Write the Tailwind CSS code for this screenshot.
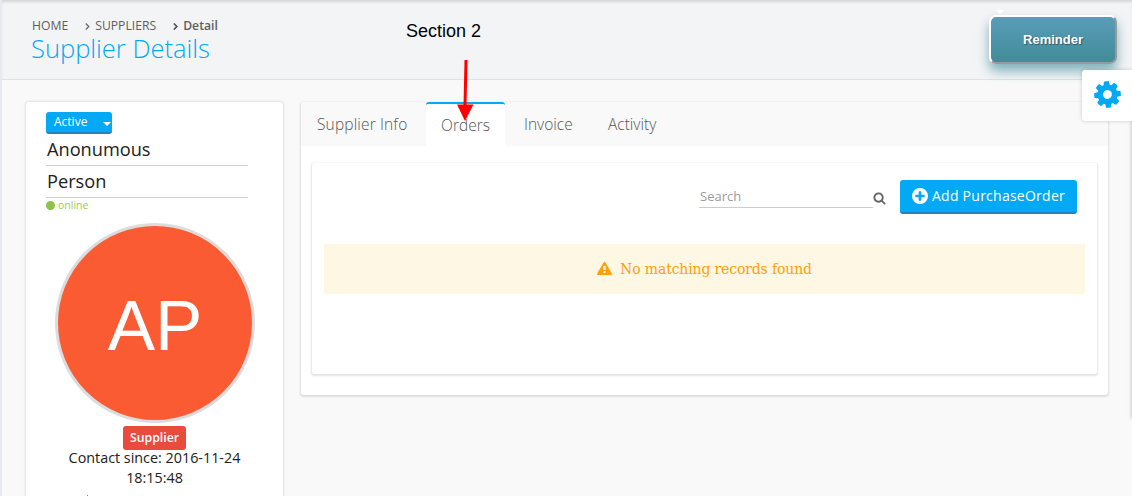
<!DOCTYPE html>
<html lang="en">
<head>
<meta charset="utf-8">
<title>Supplier Details</title>
<script src="https://cdn.jsdelivr.net/npm/@tailwindcss/browser@4"></script>
</head>
<body class="relative h-[496px] w-[1132px] overflow-hidden bg-[#f9f9f9] font-['Open_Sans',sans-serif] text-[#212121]">
<div class="flex h-full border-l-2 border-[#e7eaee]">
  <div class="flex w-full flex-col">
    <header class="flex h-20 shrink-0 items-start justify-between border-b border-[#dfe2e5] bg-[#f3f4f6] pl-[30px] pr-[15px] shadow-[inset_0_3px_3px_-1px_rgba(0,0,0,0.13)]">
      <div class="pt-[17px]">
        <nav class="flex h-[18px] items-center whitespace-nowrap text-[12.2px] leading-[18px] text-[#5e5e5e]">
          <span>HOME</span>
          <svg class="ml-[17px] mr-[5px] h-[7px] w-[5px]" viewBox="0 0 5 7" fill="none" stroke="#666" stroke-width="1.2"><path d="M.8.5 3.8 3.5.8 6.5"/></svg>
          <span>SUPPLIERS</span>
          <svg class="ml-[17px] mr-[5px] h-[7px] w-[5px]" viewBox="0 0 5 7" fill="none" stroke="#555" stroke-width="1.7"><path d="M.8.5 3.8 3.5.8 6.5"/></svg>
          <span class="font-semibold">Detail</span>
        </nav>
        <h1 class="-ml-px whitespace-nowrap text-[25.5px] font-light leading-[26px] text-[#03a9f4]">Supplier Details</h1>
      </div>
      <button class="mt-[15px] h-[49px] w-[128px] rounded-[7px] border-2 border-t-white border-l-white border-r-[#999] border-b-[#999] bg-linear-to-b from-[#5a9cb8] to-[#408c99] font-['Liberation_Sans',sans-serif] text-[13px] font-bold text-white shadow-[0_7px_12px_rgba(64,140,153,0.65)] [text-shadow:1px_1px_1px_rgba(0,0,0,0.4)]">Reminder</button>
    </header>
    <main class="flex min-h-0 flex-1 items-start gap-[18px] pl-6 pt-[22px]">
      <aside class="flex h-[394px] w-[257px] shrink-0 flex-col rounded-t-[3px] bg-white pt-[10px] shadow-[0_0_2px_1px_rgba(0,0,0,0.1)]">
        <div class="ml-5 flex h-[22px] w-[66px] shrink-0 items-center justify-between rounded-[3px] border-b-2 border-[#2a7fbd] bg-[#03a9f4] pl-2 pr-px text-[12px] leading-[18px] text-white">
          <span>Active</span>
          <svg class="mt-1 h-1 w-2" viewBox="0 0 8 4" fill="#fff"><path d="M0 0h8L4 4z"/></svg>
        </div>
        <div class="ml-5 h-8 w-[202px] shrink-0 border-b border-[#d0d0d0] pl-px text-[18.2px] leading-[31px]">Anonumous</div>
        <div class="ml-5 h-8 w-[202px] shrink-0 border-b border-[#d0d0d0] pl-px text-[18.2px] leading-[31px]">Person</div>
        <div class="ml-5 flex h-[15px] shrink-0 items-center gap-[3px] text-[10.5px] leading-[15px] text-[#9ccc50]"><span class="size-[9px] rounded-full bg-[#8bc34a]"></span><span class="-mt-px">online</span></div>
        <div class="ml-[29px] mt-[10px] flex size-[200px] shrink-0 items-center justify-center rounded-full border-3 border-[#dcdcdc] bg-[#fa5b32] pt-1.5 font-['Liberation_Sans',sans-serif] text-[71px] text-white">AP</div>
        <div class="mt-[3px] flex h-6 w-[63px] shrink-0 items-center justify-center self-center rounded-[3px] bg-[#e74c3c] pt-px text-[12.3px] font-semibold text-white">Supplier</div>
        <p class="-mt-[2px] h-[40px] shrink-0 self-center whitespace-nowrap text-center text-[14.35px] leading-5">Contact since: 2016-11-24<br>18:15:48</p>
        <div class="ml-[61px] mt-[7px] h-1 w-px bg-[#888]"></div>
      </aside>
      <section class="h-[293px] w-[807px] rounded-[3px] bg-white shadow-[0_1px_2px_1px_rgba(0,0,0,0.11)]">
        <div class="flex h-11 rounded-t-[3px] bg-[#f9f9f9] text-[15.5px] font-light leading-[44px] text-[#555]">
          <div class="w-[125px] pl-4 tracking-[0.15px]">Supplier Info</div>
          <div class="w-[79px] rounded-t-[3px] border-t-2 border-[#03a9f4] bg-white text-center leading-[42px]">Orders</div>
          <div class="w-[84px] pl-[19px]">Invoice</div>
          <div class="pl-[19px]">Activity</div>
        </div>
        <div class="ml-[11px] mt-[17px] h-[211px] w-[785px] rounded-[2px] bg-white px-3 pt-[17px] shadow-[0_1px_2px_1px_rgba(0,0,0,0.11)]">
          <div class="flex h-[34px] justify-end pr-2">
            <div class="mt-[5px] h-[23px] w-[174px] border-b border-[#ccc] pl-px text-[13px] leading-[22px] text-[#9b9b9b]">Search</div>
            <svg class="mt-[12px] h-[13px] w-[13px]" viewBox="0 128 1792 1664" fill="#666"><path d="M1216 832q0-185-131.5-316.5t-316.5-131.5-316.5 131.5-131.5 316.5 131.5 316.5 316.5 131.5 316.5-131.5 131.5-316.5zm512 832q0 52-38 90t-90 38q-54 0-90-38l-343-342q-179 124-399 124-143 0-273.5-55.5t-225-150-150-225-55.5-273.5 55.5-273.5 150-225 225-150 273.5-55.5 273.5 55.5 225 150 150 225 55.5 273.5q0 220-124 399l343 343q37 37 37 90z"/></svg>
            <button class="ml-[14px] flex w-[177px] items-center gap-1 whitespace-nowrap rounded-[3px] border-b-2 border-[#2a7fbd] bg-[#03a9f4] pl-3 text-[14px] tracking-[0.25px] text-white">
              <svg class="size-4 shrink-0" viewBox="128 128 1536 1536" fill="#fff"><path d="M1344 960v-128q0-26-19-45t-45-19h-256v-256q0-26-19-45t-45-19h-128q-26 0-45 19t-19 45v256h-256q-26 0-45 19t-19 45v128q0 26 19 45t45 19h256v256q0 26 19 45t45 19h128q26 0 45-19t19-45v-256h256q26 0 45-19t19-45zm320-64q0 209-103 385.5t-279.5 279.5-385.5 103-385.5-103-279.5-279.5-103-385.5 103-385.5 279.5-279.5 385.5-103 385.5 103 279.5 279.5 103 385.5z"/></svg>
              <span class="-mt-0.5">Add PurchaseOrder</span>
            </button>
          </div>
          <div class="mt-[30px] flex h-[50px] w-[761px] items-center justify-center gap-2 bg-[#fdf7e3] font-['DejaVu_Serif',serif] text-[14px] tracking-[-0.14px] text-[#ff9f0a]">
            <svg class="-mt-px h-[13px] w-[15px]" viewBox="0 0 1792 1664" preserveAspectRatio="none" fill="#ff9f0a"><path d="M1024 1375v-190q0-14-9.5-23.5t-22.5-9.5h-192q-13 0-22.5 9.5t-9.5 23.5v190q0 14 9.5 23.5t22.5 9.5h192q13 0 22.5-9.5t9.5-23.5zm-2-374l18-459q0-12-10-19-13-11-24-11h-220q-11 0-24 11-10 7-10 21l17 457q0 10 10 16.5t24 6.5h185q14 0 23.5-6.5t10.5-16.5zm-14-934l768 1408q35 63-2 126-17 29-46.5 46t-63.5 17h-1536q-34 0-63.5-17t-46.5-46q-37-63-2-126l768-1408q17-31 47-49t65-18 65 18 47 49z"/></svg>
            <span>No matching records found</span>
          </div>
        </div>
      </section>
    </main>
  </div>
</div>
<!-- Floating annotation and settings handle -->
<div class="absolute left-[406px] top-5 whitespace-nowrap font-['Liberation_Sans',sans-serif] text-[18px] leading-[22px] text-black">Section 2</div>
<svg class="absolute left-[455px] top-[60px] h-[62px] w-5" viewBox="0 0 20 62" fill="#f00" stroke="#f00"><path d="M11 0 10 46" stroke-width="3"/><path d="M2 44.500h16.500L10 61z" stroke="none"/></svg>
<svg class="absolute left-[996px] top-[10px] h-1 w-2" viewBox="0 0 8 4" fill="#fff"><path d="M0 0h8L4 4z"/></svg>
<div class="absolute left-[1132px] top-[100px] h-[318px] w-5 shadow-[0_0_4px_rgba(0,0,0,0.3)]"></div>
<div class="absolute left-[1082px] top-[70px] flex h-[51px] w-[50px] items-center justify-center rounded-l-[3px] bg-white pb-0.5 shadow-[0_0_4px_rgba(0,0,0,0.18)]">
  <svg class="size-[31px] -rotate-[5deg]" viewBox="0 0 1792 1792" fill="#03a9f4"><path d="M1152 896q0-106-75-181t-181-75-181 75-75 181 75 181 181 75 181-75 75-181zm512-109v222q0 12-8 23t-20 13l-185 28q-19 54-39 91 35 50 107 138 10 12 10 25t-9 23q-27 37-99 108t-94 71q-12 0-26-9l-138-108q-44 23-91 38-16 136-29 186-7 28-36 28h-222q-14 0-24.500-8.500t-11.500-21.500l-28-184q-49-16-90-37l-141 107q-10 9-25 9-14 0-25-11-126-114-165-168-7-10-7-23 0-12 8-23 15-21 51-66.500t54-70.500q-27-50-41-99l-183-27q-13-2-21-12.500t-8-23.500v-222q0-12 8-23t19-13l186-28q14-46 39-92-40-57-107-138-10-12-10-24 0-10 9-23 26-36 98.500-107.500t94.500-71.500q13 0 26 10l138 107q44-23 91-38 16-136 29-186 7-28 36-28h222q14 0 24.500 8.500t11.500 21.500l28 184q49 16 90 37l142-107q9-9 24-9 13 0 25 10 129 119 165 170 7 8 7 22 0 12-8 23-15 21-51 66.500t-54 70.500q26 50 41 98l183 28q13 2 21 12.500t8 23.500z"/></svg>
</div>
</body>
</html>
